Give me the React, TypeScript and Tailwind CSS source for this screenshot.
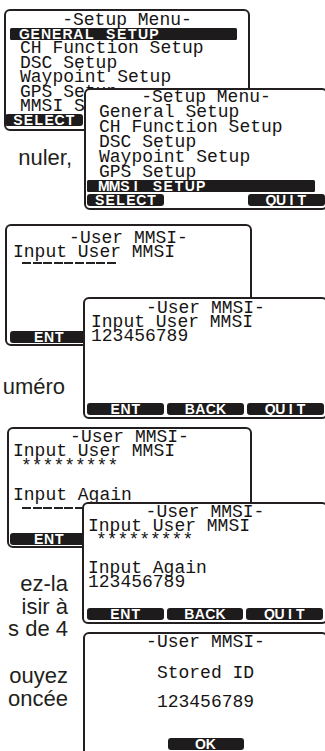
import React from "react";

const mono = "font-['Liberation_Mono','DejaVu_Sans_Mono',monospace]";
const sansB = "font-['Liberation_Sans',Arial,sans-serif] font-bold";
const sans = "font-['Liberation_Sans',Arial,sans-serif]";

function Cells({ text, narrow }: { text: string; narrow?: boolean }) {
  return (
    <span className="inline-flex">
      {Array.from(text).map((c, i) => (
        <span
          key={i}
          className={narrow ? "inline-block w-[10.4px] text-center" : "inline-block w-[10.8px] text-center"}
        >
          {c === " " ? "\u00a0" : c}
        </span>
      ))}
    </span>
  );
}

function Bar({ text, className = "" }: { text: string; className?: string }) {
  return (
    <div
      className={`h-[12px] bg-[#1d1b1b] rounded-[1.5px] text-white ${sansB} text-[14px] leading-[12px] flex items-center ${className}`}
    >
      <Cells text={text} />
    </div>
  );
}

function Btn({ label, className = "" }: { label?: string; className?: string }) {
  return (
    <div
      className={`h-[12px] bg-[#1d1b1b] rounded-[3px] text-white ${sansB} text-[14px] leading-[12px] flex items-center justify-center ${className}`}
    >
      {label ? <Cells text={label} narrow /> : null}
    </div>
  );
}

function L({ children, className = "" }: { children: React.ReactNode; className?: string }) {
  return <div className={`${mono} text-[18px] whitespace-pre text-[#161414] ${className}`}>{children}</div>;
}

function Dashes({ className = "" }: { className?: string }) {
  return (
    <div className={`flex gap-[1.6px] ${className}`}>
      {Array.from({ length: 9 }).map((_, i) => (
        <span key={i} className="block w-[9px] h-[1.5px] bg-[#222]" />
      ))}
    </div>
  );
}

function Screen({ className = "", children }: { className?: string; children: React.ReactNode }) {
  return (
    <div
      className={`absolute border-2 border-[#231f20] rounded-[6px] bg-white flex flex-col overflow-hidden ${className}`}
    >
      {children}
    </div>
  );
}

export default function App() {
  return (
    <div className="relative w-[325px] h-[751px] overflow-hidden bg-white">
      {/* paragraph fragments (cut off at the left of the page) */}
      <div className={`absolute left-0 top-[147px] w-[72px] flex flex-col items-end ${sans} text-[22px] leading-[22.5px] text-[#231f20]`}>
        <div className="whitespace-nowrap">nuler,</div>
      </div>
      <div className={`absolute left-0 top-[376px] w-[65px] flex flex-col items-end ${sans} text-[22px] leading-[22.5px] text-[#231f20]`}>
        <div className="whitespace-nowrap">uméro</div>
      </div>
      <div className={`absolute left-0 top-[573px] w-[68px] flex flex-col items-end ${sans} text-[22px] leading-[22.5px] text-[#231f20]`}>
        <div className="whitespace-nowrap">ez-la</div>
        <div className="whitespace-nowrap">isir à</div>
        <div className="whitespace-nowrap">s de 4</div>
      </div>
      <div className={`absolute left-0 top-[665px] w-[68px] flex flex-col items-end ${sans} text-[22px] leading-[22.5px] text-[#231f20]`}>
        <div className="whitespace-nowrap">ouyez</div>
        <div className="whitespace-nowrap">oncée</div>
      </div>

      {/* Screen 1 */}
      <Screen className="left-[4px] top-[9px] w-[246px] h-[122px]">
        <div className="pt-[2px]">
          <L className="h-[14.5px] leading-[14.5px] text-center">-Setup Menu-</L>
          <Bar text="GENERAL SETUP" className="ml-[4px] w-[227px] pl-[9px]" />
          <div className="mt-[1.5px] pl-[14px]">
            <L className="h-[14.5px] leading-[14.5px]">CH Function Setup</L>
            <L className="h-[14.5px] leading-[14.5px]">DSC Setup</L>
            <L className="h-[14.5px] leading-[14.5px]">Waypoint Setup</L>
            <L className="h-[14.5px] leading-[14.5px]">GPS Setup</L>
            <L className="h-[14.5px] leading-[14.5px]">MMSI Setup</L>
          </div>
        </div>
        <div className="mt-auto mb-[3px] flex">
          <Btn label="SELECT" className="w-[78px] -ml-[1px]" />
        </div>
      </Screen>

      {/* Screen 2 */}
      <Screen className="left-[84px] top-[88px] w-[244px] h-[122px]">
        <L className="h-[15px] leading-[15px] text-center">-Setup Menu-</L>
        <div className="pl-[13px]">
          <L className="h-[15px] leading-[15px]">General Setup</L>
          <L className="h-[15px] leading-[15px]">CH Function Setup</L>
          <L className="h-[15px] leading-[15px]">DSC Setup</L>
          <L className="h-[15px] leading-[15px]">Waypoint Setup</L>
          <L className="h-[15px] leading-[15px]">GPS Setup</L>
        </div>
        <Bar text="MMSI SETUP" className="ml-[1px] w-[228px] pl-[11px]" />
        <div className="mt-auto mb-[2px] flex gap-[3px] px-[1px]">
          <Btn label="SELECT" className="flex-1" />
          <div className="flex-1" />
          <Btn label="QUIT" className="flex-1" />
        </div>
      </Screen>

      {/* Screen 3 */}
      <Screen className="left-[5px] top-[224px] w-[247px] h-[122px]">
        <div className="pt-[6px]">
          <L className="h-[13px] leading-[13px] text-center">-User MMSI-</L>
          <div className="pl-[6px]">
            <L className="h-[14.5px] leading-[14.5px]">Input User MMSI</L>
            <Dashes className="mt-[2.5px] ml-[9px]" />
          </div>
        </div>
        <div className="mt-auto mb-[1px] flex px-[3px]">
          <Btn label="ENT" className="w-[78px]" />
        </div>
      </Screen>

      {/* Screen 4 */}
      <Screen className="left-[83px] top-[297px] w-[245px] h-[122px]">
        <div className="pt-[3px]">
          <L className="h-[13px] leading-[13px] text-center">-User MMSI-</L>
          <div className="pl-[6px]">
            <L className="h-[14px] leading-[14px]">Input User MMSI</L>
            <L className="h-[14px] leading-[14px]">123456789</L>
          </div>
        </div>
        <div className="mt-auto mb-[2px] flex gap-[3px] px-[2px]">
          <Btn label="ENT" className="flex-1" />
          <Btn label="BACK" className="flex-1" />
          <Btn label="QUIT" className="flex-1" />
        </div>
      </Screen>

      {/* Screen 5 */}
      <Screen className="left-[7px] top-[427px] w-[245px] h-[121px]">
        <div className="pt-[1px]">
          <L className="h-[14px] leading-[14px] text-center">-User MMSI-</L>
          <div className="pl-[4px]">
            <L className="h-[14.5px] leading-[14.5px]">Input User MMSI</L>
            <L className="h-[14.5px] leading-[14.5px] pl-[8px]">*********</L>
            <div className="h-[14.5px]" />
            <L className="h-[14.5px] leading-[14.5px]">Input Again</L>
            <Dashes className="mt-[5px] ml-[9px]" />
          </div>
        </div>
        <div className="mt-auto mb-[1px] flex px-[1px]">
          <Btn label="ENT" className="w-[78px]" />
        </div>
      </Screen>

      {/* Screen 6 */}
      <Screen className="left-[82px] top-[502px] w-[246px] h-[122px]">
        <div className="pt-[1px]">
          <L className="h-[14px] leading-[14px] text-center">-User MMSI-</L>
          <div className="pl-[4px]">
            <L className="h-[14px] leading-[14px]">Input User MMSI</L>
            <L className="h-[14px] leading-[14px] pl-[8px]">*********</L>
            <div className="h-[14px]" />
            <L className="h-[14px] leading-[14px]">Input Again</L>
            <L className="h-[14px] leading-[14px]">123456789</L>
          </div>
        </div>
        <div className="mt-auto mb-[2px] flex gap-[3px] px-[3px]">
          <Btn label="ENT" className="flex-1" />
          <Btn label="BACK" className="flex-1" />
          <Btn label="QUIT" className="flex-1" />
        </div>
      </Screen>

      {/* Screen 7 */}
      <Screen className="left-[83px] top-[632px] w-[245px] h-[140px]">
        <div className="pt-[1px] flex flex-col items-center">
          <L className="h-[14.5px] leading-[14.5px]">-User MMSI-</L>
          <L className="mt-[16.5px] h-[14.5px] leading-[14.5px]">Stored ID</L>
          <L className="mt-[14.5px] h-[14.5px] leading-[14.5px]">123456789</L>
          <Btn label="OK" className="mt-[28.5px] w-[76px]" />
        </div>
      </Screen>
    </div>
  );
}
